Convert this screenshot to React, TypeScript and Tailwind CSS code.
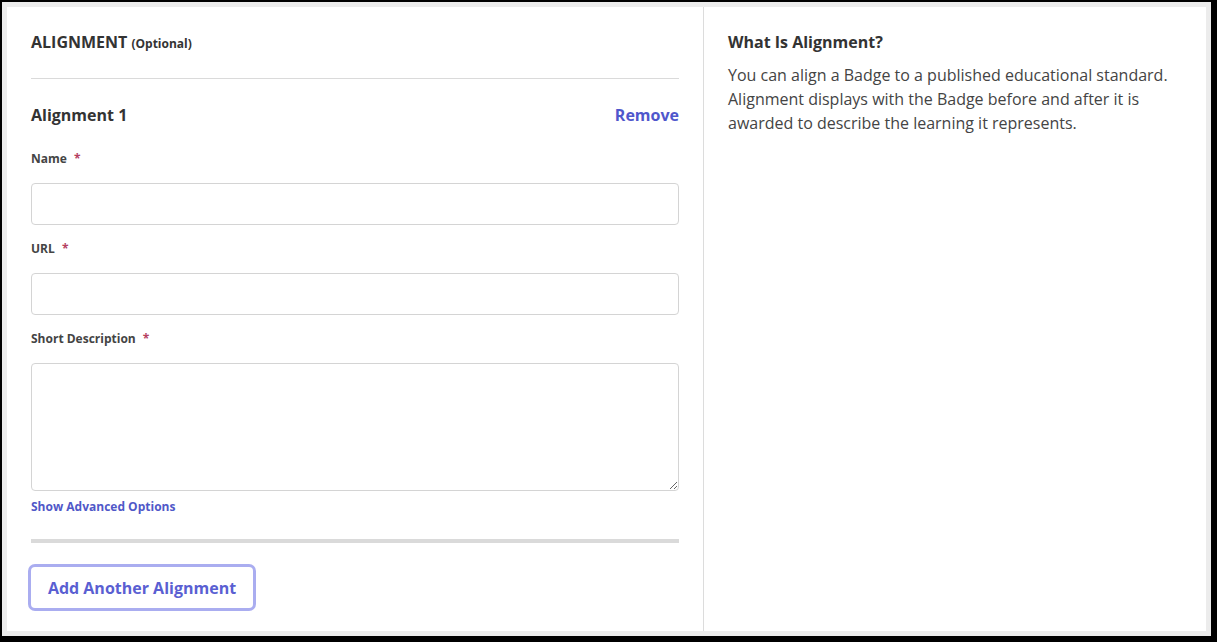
export default function App() {
  return (
    <div
      className="h-[642px] w-[1217px] bg-black pt-[2px] pl-[2px] pr-[6px] pb-[6px]"
      style={{ fontFamily: '"Open Sans", "Liberation Sans", sans-serif' }}
    >
      <div className="flex h-full border-[5px] border-[#ececec] bg-white">
        <section className="w-[697px] shrink-0 border-r border-[#dcdcdc] px-6 pt-[25px]">
          <h2 className="text-base leading-5 font-bold text-[#333]">
            ALIGNMENT <span className="text-xs font-bold">(Optional)</span>
          </h2>
          <hr className="mt-[26px] border-t border-[#dadada]" />

          <div className="mt-6 flex items-center justify-between">
            <h3 className="text-base leading-6 font-bold text-[#333]">Alignment 1</h3>
            <button className="text-base leading-6 font-bold text-[#4f57cc]">Remove</button>
          </div>

          <label className="mt-6 block text-xs leading-4 font-bold text-[#444]">
            Name <span className="ml-1 text-[#b5405f]">*</span>
          </label>
          <input className="mt-4 block h-[42px] w-full rounded border border-[#d4d4d4] px-3 outline-none" />

          <label className="mt-4 block text-xs leading-4 font-bold text-[#444]">
            URL <span className="ml-1 text-[#b5405f]">*</span>
          </label>
          <input className="mt-4 block h-[42px] w-full rounded border border-[#d4d4d4] px-3 outline-none" />

          <label className="mt-4 block text-xs leading-4 font-bold text-[#444]">
            Short Description <span className="ml-1 text-[#b5405f]">*</span>
          </label>
          <textarea className="mt-4 block h-[128px] w-full rounded border border-[#d4d4d4] px-3 py-2 outline-none" />

          <button className="mt-2 block text-xs leading-4 font-bold text-[#5058c8]">
            Show Advanced Options
          </button>

          <div className="mt-6 h-1 bg-[#dadada]" />

          <button className="mt-6 h-[41px] w-[222px] rounded bg-white text-base font-bold text-[#5a5fd2] ring-[3px] ring-[#aaadf0]">
            Add Another Alignment
          </button>
        </section>

        <aside className="flex-1 px-6 pt-[25px]">
          <h2 className="text-base leading-5 font-bold text-[#333]">What Is Alignment?</h2>
          <p className="mt-[11px] w-[450px] text-base leading-6 text-[#444]">
            You can align a Badge to a published educational standard. Alignment displays with the
            Badge before and after it is awarded to describe the learning it represents.
          </p>
        </aside>
      </div>
    </div>
  );
}
